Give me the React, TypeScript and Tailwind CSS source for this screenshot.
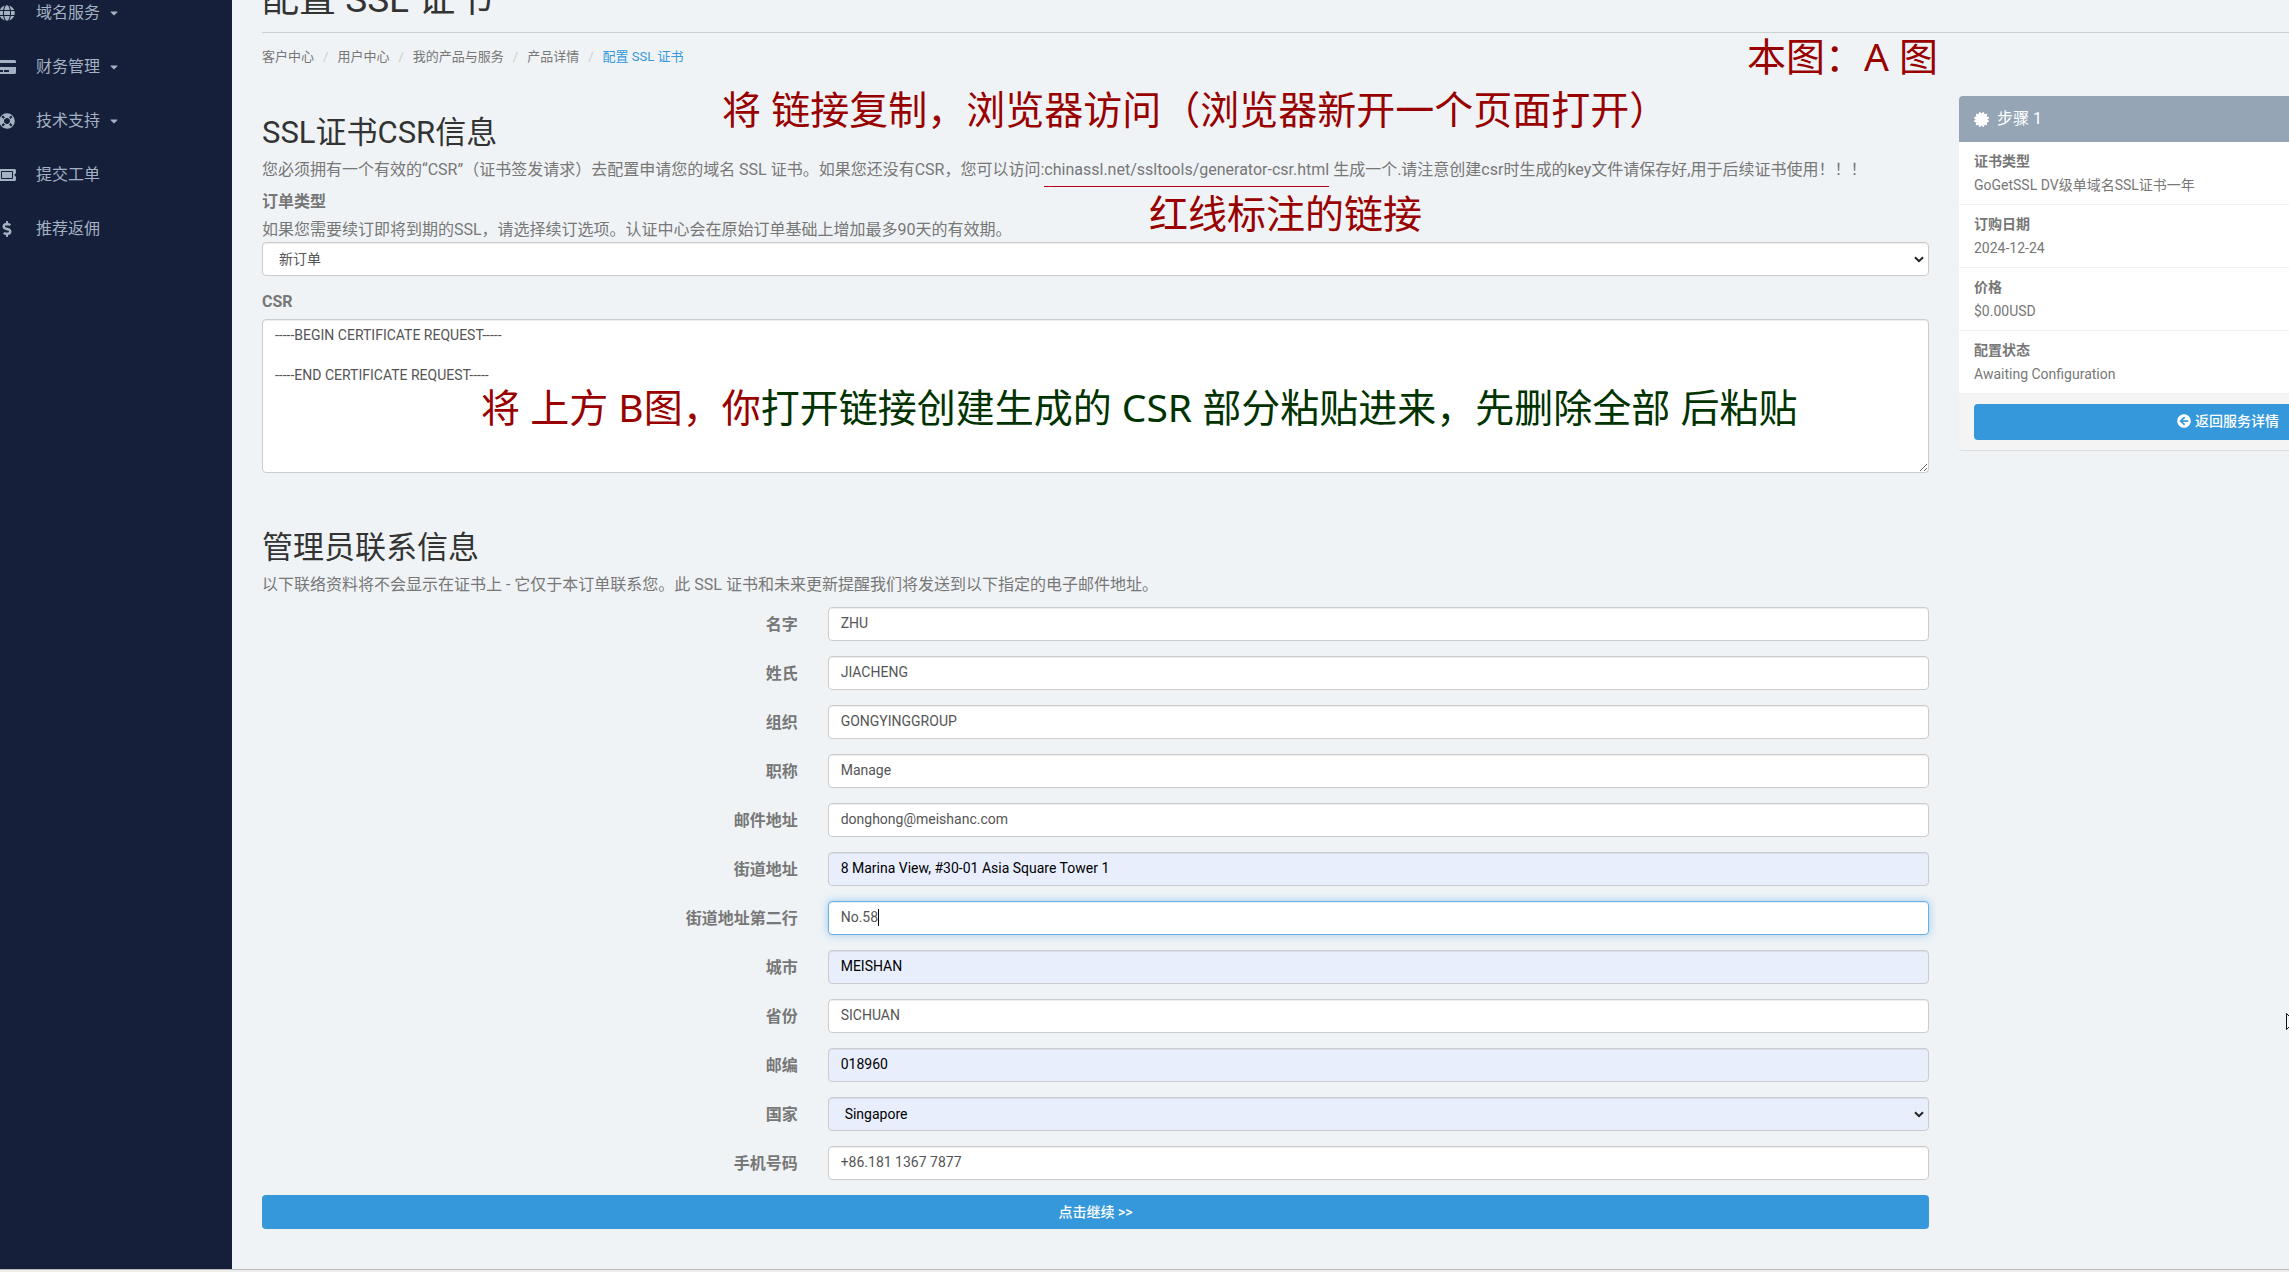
import React from "react";
import { FaArrowCircleLeft, FaCaretDown, FaCertificate, FaCreditCard, FaDollarSign, FaGlobe, FaLifeRing, FaTicketAlt } from "react-icons/fa";

const menu = [
  { label: "域名服务", icon: <FaGlobe className="h-4 w-4" />, dropdown: true },
  { label: "财务管理", icon: <FaCreditCard className="h-4 w-[18px]" />, dropdown: true },
  { label: "技术支持", icon: <FaLifeRing className="h-4 w-4" />, dropdown: true },
  { label: "提交工单", icon: <FaTicketAlt className="h-4 w-[18px]" />, dropdown: false },
  { label: "推荐返佣", icon: <FaDollarSign className="h-4 w-4" />, dropdown: false },
];

const crumbs = ["客户中心", "用户中心", "我的产品与服务", "产品详情"];

type Field = {
  id: string;
  label: string;
  value: string;
  autofilled?: boolean;
  focused?: boolean;
  select?: boolean;
};

const fields: Field[] = [
  { id: "firstname", label: "名字", value: "ZHU" },
  { id: "lastname", label: "姓氏", value: "JIACHENG" },
  { id: "orgname", label: "组织", value: "GONGYINGGROUP" },
  { id: "jobtitle", label: "职称", value: "Manage" },
  { id: "email", label: "邮件地址", value: "donghong@meishanc.com" },
  { id: "address1", label: "街道地址", value: "8 Marina View, #30-01 Asia Square Tower 1", autofilled: true },
  { id: "address2", label: "街道地址第二行", value: "No.58", focused: true },
  { id: "city", label: "城市", value: "MEISHAN", autofilled: true },
  { id: "state", label: "省份", value: "SICHUAN" },
  { id: "postcode", label: "邮编", value: "018960", autofilled: true },
  { id: "country", label: "国家", value: "Singapore", autofilled: true, select: true },
  { id: "phone", label: "手机号码", value: "+86.181 1367 7877" },
];

const details = [
  { term: "证书类型", value: "GoGetSSL DV级单域名SSL证书一年" },
  { term: "订购日期", value: "2024-12-24" },
  { term: "价格", value: "$0.00USD" },
  { term: "配置状态", value: "Awaiting Configuration" },
];

const control = "block w-full rounded border text-sm outline-none";
const plainTone = "border-[#ccc] bg-white text-[#555] shadow-[inset_0_1px_1px_rgba(0,0,0,0.075)]";
const autofillTone = "border-[#ccc] bg-[#e8eefc] text-black shadow-[inset_0_1px_1px_rgba(0,0,0,0.075)]";
const focusTone = "border-[#66afe9] bg-white text-[#555] shadow-[inset_0_1px_1px_rgba(0,0,0,0.075),0_0_8px_rgba(102,175,233,0.6)]";

const note = "pointer-events-none absolute whitespace-nowrap font-['Noto_Sans','Noto_Sans_CJK_SC',sans-serif] text-[39px] leading-[48px]";

function controlTone(f: Field) {
  if (f.focused) return focusTone;
  return f.autofilled ? autofillTone : plainTone;
}

function Select({ id, value, tone }: { id: string; value: string; tone: string }) {
  return (
    <div className="relative">
      <select id={id} defaultValue={value} className={`${control} h-[34px] appearance-none px-4 ${tone}`}>
        <option value={value}>{value}</option>
      </select>
      <svg className="pointer-events-none absolute right-[5px] top-[14px] h-[7px] w-[10px]" viewBox="0 0 10 7" fill="none">
        <path d="M1 1.2 5 5.2 9 1.2" stroke="#222" strokeWidth="2" />
      </svg>
    </div>
  );
}

function FieldRow({ field }: { field: Field }) {
  return (
    <div className="-mx-[15px] flex">
      <label htmlFor={field.id} className="w-1/3 px-[15px] pt-[6px] text-right text-base font-bold leading-6">
        {field.label}
      </label>
      <div className="w-2/3 px-[15px]">
        {field.select ? (
          <Select id={field.id} value={field.value} tone={controlTone(field)} />
        ) : (
          <div className="relative">
            <input id={field.id} type="text" defaultValue={field.value} className={`${control} h-[34px] px-3 pb-1 pt-0.5 ${controlTone(field)}`} />
            {field.focused && (
              <span className="pointer-events-none absolute left-[13px] top-2 flex text-sm leading-[17px]">
                <span className="invisible">{field.value}</span>
                <span className="w-px bg-black" />
              </span>
            )}
          </div>
        )}
      </div>
    </div>
  );
}

function Sidebar() {
  return (
    <nav className="w-[232px] shrink-0 overflow-hidden bg-[#151f39] text-[#a3b1c3]">
      <ul className="-mt-[14px]">
        {menu.map((m) => (
          <li key={m.label}>
            <a href="#" className="-ml-1 flex h-[54px] items-center">
              <span className="flex w-[22px] justify-center">{m.icon}</span>
              <span className="ml-[18px] text-base leading-6">{m.label}</span>
              {m.dropdown && <FaCaretDown className="ml-2 h-3 w-3" />}
            </a>
          </li>
        ))}
      </ul>
    </nav>
  );
}

function OrderPanel() {
  return (
    <aside className="-mr-[208px] mt-[23px] w-[538px] shrink-0 self-start rounded border-b border-[#d8dde1] bg-[#f4f4f4]">
      <h3 className="flex h-[46px] items-center gap-2 rounded-t bg-[#95a5b6] px-[15px] text-base text-white">
        <FaCertificate className="text-[15px]" />
        步骤 1
      </h3>
      <dl className="bg-white text-sm">
        {details.map((d) => (
          <div key={d.term} className="h-[63px] border-b border-[#f1f1f1] px-[15px] pt-[7px]">
            <dt className="font-bold leading-6">{d.term}</dt>
            <dd className="leading-6">{d.value}</dd>
          </div>
        ))}
      </dl>
      <div className="px-[15px] py-[10px]">
        <button type="button" className="flex h-9 w-full items-center justify-center gap-1 rounded bg-[#3598db] pb-0.5 text-sm font-medium text-white">
          <FaArrowCircleLeft />
          返回服务详情
        </button>
      </div>
    </aside>
  );
}

export default function App() {
  return (
    <div className="flex h-screen flex-col overflow-hidden bg-[#eff3f6] font-[Roboto,'Noto_Sans_CJK_SC',sans-serif] text-[#777] [text-spacing-trim:space-all]">
      <div className="flex min-h-0 flex-1">
        <Sidebar />
        <main className="relative min-w-0 flex-1 overflow-hidden pl-[30px]">
          <header className="flex h-[33px] flex-col justify-end border-b border-[#ccd0d4]">
            <h1 className="pb-3 text-[37px] leading-10 text-[#333]">配置 SSL 证书</h1>
          </header>
          <ol className="flex h-10 items-center pt-2 text-[13px]">
            {crumbs.map((c) => (
              <li key={c}>
                <a href="#">{c}</a>
                <span className="px-[9px] text-[#ccc]">/</span>
              </li>
            ))}
            <li className="text-[#3598db]">配置 SSL 证书</li>
          </ol>

          <div className="flex items-start gap-[30px]">
            <form className="min-w-0 flex-1 pt-[42px]" onSubmit={(e) => e.preventDefault()}>
              <h2 className="text-[31px] leading-9 text-[#333]">SSL证书CSR信息</h2>
              <p className="mt-[7px] text-base leading-6">
                您必须拥有一个有效的“CSR”（证书签发请求）去配置申请您的域名 SSL 证书。如果您还没有CSR，您可以访问:
                <span className="relative">
                  chinassl.net/ssltools/generator-csr.html
                  <span className="absolute -bottom-2 left-0 h-px w-full bg-[#b0001c]" />
                </span>{" "}
                生成一个.请注意创建csr时生成的key文件请保存好,用于后续证书使用！！！
              </p>
              <label htmlFor="ordertype" className="mt-2 block text-base font-bold leading-6">订单类型</label>
              <p className="mt-1 text-base leading-6">
                如果您需要续订即将到期的SSL，请选择续订选项。认证中心会在原始订单基础上增加最多90天的有效期。
              </p>
              <Select id="ordertype" value="新订单" tone={plainTone} />
              <label htmlFor="csr" className="mt-[14px] block text-base font-bold leading-6">CSR</label>
              <textarea
                id="csr"
                className={`${control} mt-[5px] h-[154px] px-3 py-[5px] leading-5 ${plainTone}`}
                defaultValue={"-----BEGIN CERTIFICATE REQUEST-----\n\n-----END CERTIFICATE REQUEST-----"}
              />

              <h2 className="mt-[57px] text-[31px] leading-9 text-[#333]">管理员联系信息</h2>
              <p className="mt-[7px] text-base leading-6">
                以下联络资料将不会显示在证书上 - 它仅于本订单联系您。此 SSL 证书和未来更新提醒我们将发送到以下指定的电子邮件地址。
              </p>
              <div className="mt-[10px] flex flex-col gap-[15px]">
                {fields.map((f) => (
                  <FieldRow key={f.id} field={f} />
                ))}
                <button type="submit" className="h-[34px] rounded bg-[#3598db] text-sm font-medium text-white">
                  点击继续 &gt;&gt;
                </button>
              </div>
            </form>
            <OrderPanel />
          </div>

          {/* guide notes laid over the page */}
          <p className={`${note} left-[1515px] top-[32px] text-[#990000]`}>本图：A 图</p>
          <p className={`${note} left-[490px] top-[85px] text-[#990000]`}>将 链接复制，浏览器访问（浏览器新开一个页面打开）</p>
          <p className={`${note} left-[917px] top-[189px] text-[#990000]`}>红线标注的链接</p>
          <p className={`${note} left-[249px] top-[383px] text-[#003300]`}>
            <span className="text-[#990000]">将 上方 B图，你</span>打开链接创建生成的 CSR 部分粘贴进来，先删除全部 后粘贴
          </p>
          {/* mouse pointer */}
          <svg className="absolute right-0 top-[1013px] h-[17px] w-[3px]" viewBox="0 0 3 17">
            <path d="M.5.5V16.5L3 14M.5.5 3 3" fill="#fff" stroke="#111" />
          </svg>
        </main>
      </div>
      <div className="h-[3px] shrink-0 border-t border-[#bbb] bg-[#eee]" />
    </div>
  );
}
